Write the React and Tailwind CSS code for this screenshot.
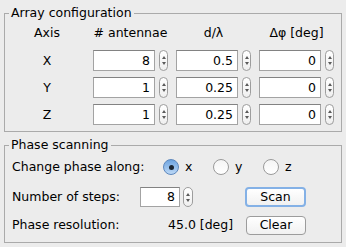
import React from 'react';

const rows = [
  { axis: 'X', n: '8', d: '0.5', phi: '0' },
  { axis: 'Y', n: '1', d: '0.25', phi: '0' },
  { axis: 'Z', n: '1', d: '0.25', phi: '0' },
];

function Spinner({ h = 'h-[21px]', w = 'w-[9px]' }) {
  return (
    <div className={`${w} ${h} rounded-full border border-[#9d9d9d] bg-linear-to-b from-white to-[#efefef] flex flex-col items-center justify-center gap-[3px]`}>
      <div className="w-0 h-0 border-x-[2.5px] border-x-transparent border-b-[3px] border-b-[#5a5a5a]" />
      <div className="w-0 h-0 border-x-[2.5px] border-x-transparent border-t-[3px] border-t-[#5a5a5a]" />
    </div>
  );
}

function Field({ value, w = 'w-[62px]', h = 'h-[21px]' }) {
  return (
    <div className={`${w} ${h} bg-white border border-[#a3a3a3] border-t-[#828282] text-right pr-[4px] flex items-center justify-end`}>
      {value}
    </div>
  );
}

function SpinField({ value }) {
  return (
    <div className="flex items-center gap-[4px]">
      <Field value={value} />
      <Spinner />
    </div>
  );
}

function Radio({ label, checked }) {
  return (
    <div className="w-[50px] flex items-center gap-[6px]">
      {checked ? (
        <div className="w-[16px] h-[16px] rounded-full border border-[#5c87bd] bg-linear-to-b from-[#6da4e0] to-[#bcd8f6] flex items-center justify-center">
          <div className="w-[5px] h-[5px] rounded-full bg-[#1b2633]" />
        </div>
      ) : (
        <div className="w-[16px] h-[16px] rounded-full border border-[#9a9a9a] bg-linear-to-b from-[#f4f4f4] to-white" />
      )}
      <span>{label}</span>
    </div>
  );
}

export default function App() {
  return (
    <div className="w-[346px] h-[247px] bg-[#ececec] px-[4px] pt-[5px] font-['DejaVu_Sans',sans-serif] text-[12.5px] leading-[16px] text-black">
      <fieldset className="border border-[#aaaaaa] pb-[6px]">
        <legend className="ml-[4px] px-[2px]">Array configuration</legend>
        <div className="grid grid-cols-[80px_75px_75px_75px] gap-x-[8px] pt-[4px]">
          <div className="pl-[4px] text-center">Axis</div>
          <div className="text-center"># antennae</div>
          <div className="text-center">d/λ</div>
          <div className="text-center">Δφ [deg]</div>
        </div>
        <div className="grid grid-cols-[80px_75px_75px_75px] gap-x-[8px] gap-y-[6px] mt-[9px]">
          {rows.map((r) => (
            <React.Fragment key={r.axis}>
              <div className="pl-[4px] flex items-center justify-center">{r.axis}</div>
              <SpinField value={r.n} />
              <SpinField value={r.d} />
              <SpinField value={r.phi} />
            </React.Fragment>
          ))}
        </div>
      </fieldset>

      <fieldset className="mt-[5px] border border-[#aaaaaa] px-[7px] pb-[7px]">
        <legend className="-ml-[3px] px-[2px]">Phase scanning</legend>
        <div className="pt-[4px] flex items-center h-[20px] box-content">
          <div className="w-[151px]">Change phase along:</div>
          <Radio label="x" checked />
          <Radio label="y" />
          <Radio label="z" />
        </div>
        <div className="mt-[10px] flex items-center h-[20px]">
          <div className="w-[128px]">Number of steps:</div>
          <Field value="8" w="w-[40px]" h="h-[20px]" />
          <div className="ml-[3px]">
            <Spinner w="w-[10px]" h="h-[20px]" />
          </div>
          <button className="ml-[52px] w-[61px] h-[20px] rounded-[4px] border-2 border-[#84b1e6] bg-linear-to-b from-white to-[#f1f1f1] flex items-center justify-center">
            Scan
          </button>
        </div>
        <div className="mt-[8px] flex items-center h-[20px]">
          <div className="w-[156px]">Phase resolution:</div>
          <div className="w-[78px]">45.0 [deg]</div>
          <button className="w-[60px] h-[19px] rounded-[4px] border border-[#9c9c9c] bg-linear-to-b from-white to-[#f1f1f1] flex items-center justify-center">
            Clear
          </button>
        </div>
      </fieldset>
    </div>
  );
}
